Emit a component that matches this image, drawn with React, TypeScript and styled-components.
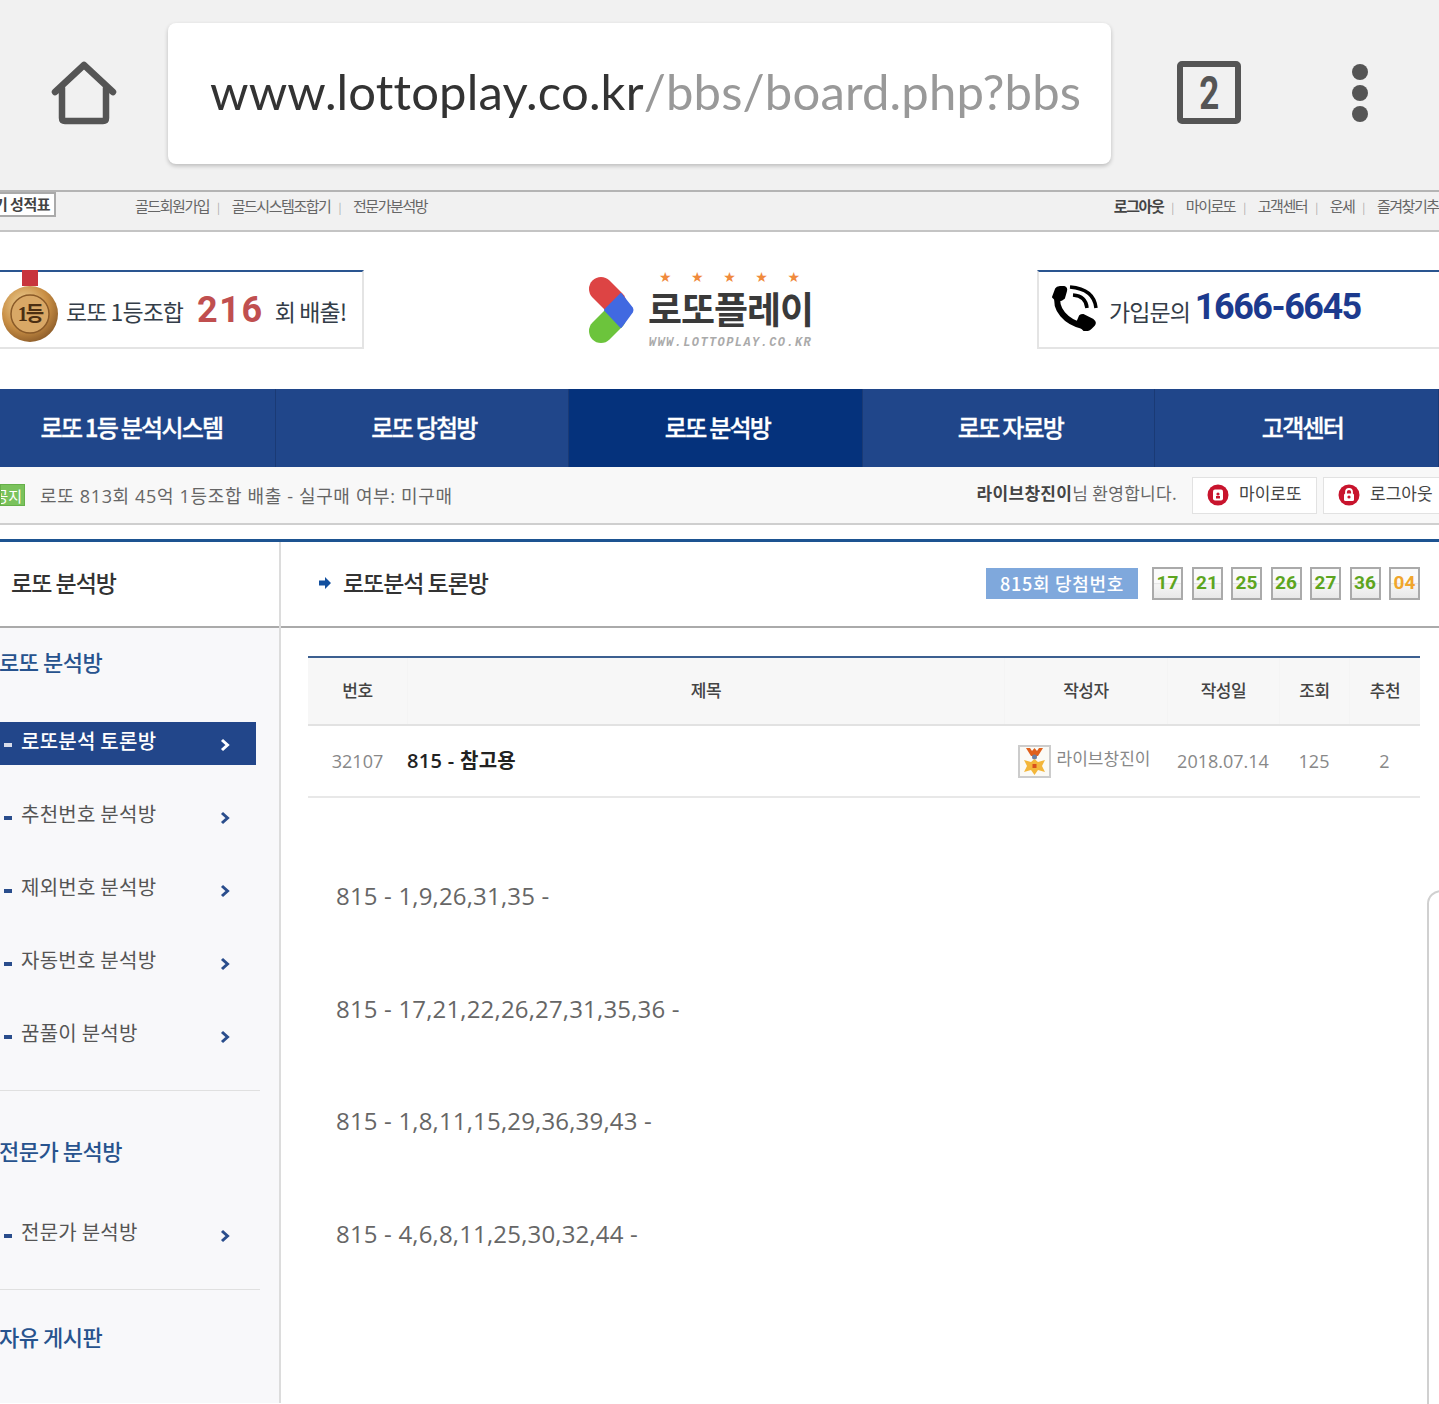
import React from "react";
import styled, { createGlobalStyle } from "styled-components";

const KR = `"Noto Sans CJK KR", "Noto Sans", sans-serif`;
const LATIN = `"Roboto", "Noto Sans CJK KR", sans-serif`;

const Global = createGlobalStyle`
  html, body { margin: 0; padding: 0; background: #fff; }
  body { font-family: ${KR}; color: #333; }
  * { box-sizing: border-box; }
`;

const Page = styled.div`
  position: relative;
  width: 1439px;
  height: 1404px;
  overflow: hidden;
  background: #fff;
`;

/* browser chrome */
const BrowserBar = styled.div`
  display: grid;
  grid-template-columns: 168px 943px 196px 106px 26px;
  align-items: center;
  height: 192px;
  padding-bottom: 3px;
  background: #f1f1f1;
  border-bottom: 2px solid #b4b4b4;
`;
const IconCell = styled.div`
  display: flex;
  justify-content: center;
  align-items: center;
  margin-bottom: 2px;
`;
const UrlBox = styled.div`
  display: flex;
  align-items: center;
  height: 141px;
  padding: 0 0 6px 42px;
  background: #fff;
  border-radius: 8px;
  box-shadow: 0 2px 4px rgba(0, 0, 0, 0.22);
  font-family: "Lato", sans-serif;
  font-size: 49px;
  letter-spacing: 0.16px;
  white-space: nowrap;
  color: #333;
`;
const UrlPath = styled.span`
  color: #999;
`;
const TabBox = styled.div`
  display: flex;
  align-items: center;
  justify-content: center;
  width: 64px;
  height: 63px;
  border: 6px solid #555;
  border-radius: 5px;
  font-family: "Roboto", sans-serif;
  font-weight: 700;
  font-size: 46px;
  line-height: 1;
  color: #555;
`;
const TabCount = styled.span`
  display: inline-block;
  transform: scaleX(0.76);
`;
const Dots = styled.div`
  display: flex;
  flex-direction: column;
  gap: 5px;
`;
const Dot = styled.span`
  width: 16px;
  height: 16px;
  border-radius: 50%;
  background: #555;
`;

/* top links */
const TopLinks = styled.div`
  display: flex;
  align-items: flex-start;
  height: 40px;
  background: #f1f1f1;
  border-bottom: 2px solid #c4c4c4;
  font-size: 15px;
  letter-spacing: -1.45px;
  color: #666;
  white-space: nowrap;
`;
const ScoreBox = styled.div`
  display: flex;
  align-items: center;
  height: 25px;
  margin-left: -10px;
  margin-top: 0;
  padding: 0 4px 2px;
  width: 66px;
  justify-content: flex-end;
  background: #fff;
  border: 2px solid #aaa;
  font-size: 15px;
  letter-spacing: -0.5px;
  font-weight: 700;
  color: #444;
`;
const LinkGroup = styled.div<{ $left?: number; $right?: number }>`
  display: flex;
  align-items: center;
  height: 26px;
  margin-left: ${(p) => (p.$left !== undefined ? `${p.$left}px` : "auto")};
  margin-right: ${(p) => p.$right ?? 0}px;
`;
const TopLink = styled.span<{ $bold?: boolean }>`
  font-weight: ${(p) => (p.$bold ? 700 : 400)};
  color: ${(p) => (p.$bold ? "#444" : "#666")};
  &:not(:last-child)::after {
    content: "|";
    margin: 0 13px 0 8px;
    font-size: 11px;
    font-weight: 400;
    color: #aaa;
  }
`;

/* header */
const Header = styled.div`
  display: grid;
  grid-template-columns: 364px 1fr 402px;
  height: 157px;
  padding-top: 38px;
  align-items: start;
  background: #fff;
`;
const Banner = styled.div<{ $side: "left" | "right" }>`
  position: relative;
  display: flex;
  align-items: center;
  height: 79px;
  border-top: 2px solid #2a5590;
  border-bottom: 2px solid #e4e4e4;
  ${(p) =>
    p.$side === "left"
      ? "border-right: 2px solid #e4e4e4; padding-left: 2px;"
      : "border-left: 2px solid #e4e4e4; padding-left: 12px;"}
`;
const MedalIcon = styled.svg`
  flex: none;
  margin-top: -2px;
  align-self: flex-start;
`;
const PhoneIcon = styled.svg`
  flex: none;
  margin-top: -4px;
`;
const BannerText = styled.span<{ $gap?: number }>`
  margin-left: ${(p) => p.$gap ?? 0}px;
  margin-top: 3px;
  font-size: 23px;
  letter-spacing: -0.95px;
  color: #333d48;
  white-space: nowrap;
`;
const BigRed = styled.span`
  font-family: ${LATIN};
  font-weight: 700;
  font-size: 36px;
  letter-spacing: 1.6px;
  color: #c04f4f;
  margin: 0 11px 0 14px;
`;
const BigBlue = styled.span`
  font-family: ${LATIN};
  font-weight: 700;
  font-size: 36px;
  letter-spacing: -1.5px;
  color: #1c3a8e;
  margin: -6px 0 0 5px;
`;
const Logo = styled.div`
  display: flex;
  align-items: center;
  justify-self: center;
  margin-top: -1px;
  gap: 14px;
  width: 224px;
`;
const LogoMark = styled.svg`
  flex: none;
  margin-top: 0;
`;
const LogoRight = styled.div`
  display: flex;
  flex-direction: column;
  align-items: center;
  width: 164px;
`;
const Stars = styled.div`
  display: flex;
  justify-content: space-between;
  width: 141px;
  margin-right: 2px;
  height: 16px;
  font-size: 14px;
  line-height: 16px;
  color: #f08a3c;
  font-family: "DejaVu Sans", sans-serif;
`;
const LogoWord = styled.div`
  font-size: 37px;
  line-height: 46px;
  font-weight: 700;
  letter-spacing: -1px;
  color: #3a3a3a;
  white-space: nowrap;
`;
const LogoUrl = styled.div`
  font-family: "Liberation Mono", monospace;
  font-size: 12px;
  line-height: 14px;
  margin-top: 5px;
  font-weight: 700;
  font-style: italic;
  letter-spacing: 1.4px;
  color: #aaa;
`;

/* nav */
const Nav = styled.nav`
  display: grid;
  grid-template-columns: 276px 293px 294px 292px 284px;
  height: 78px;
  background: #20468a;
`;
const NavItem = styled.div<{ $active?: boolean; $shift?: number }>`
  display: flex;
  align-items: center;
  justify-content: center;
  padding: 0 ${(p) => (p.$shift && p.$shift < 0 ? -p.$shift : 0)}px 4px ${(p) => (p.$shift && p.$shift > 0 ? p.$shift : 0)}px;
  background: ${(p) => (p.$active ? "#05327c" : "#20468a")};
  border-right: 1px solid #1a3a75;
  font-size: 24px;
  font-weight: 500;
  -webkit-text-stroke: 0.3px #fff;
  letter-spacing: -1.75px;
  color: #fff;
`;

/* notice */
const Notice = styled.div`
  display: flex;
  align-items: center;
  height: 58px;
  background: #f8f8f8;
  border-bottom: 2px solid #cfcfcf;
`;
const NoticeBadge = styled.span`
  display: flex;
  align-items: center;
  justify-content: flex-end;
  width: 25px;
  height: 22px;
  padding-right: 2px;
  background: #7ac25c;
  border: 1px solid #66b04a;
  color: #fff;
  font-size: 15px;
  overflow: hidden;
  white-space: nowrap;
`;
const NoticeText = styled.span`
  margin-left: 15px;
  font-family: "Open Sans", ${KR};
  font-size: 18px;
  letter-spacing: 0.65px;
  color: #666;
  white-space: nowrap;
`;
const Welcome = styled.span`
  margin: -5px 0 0 auto;
  font-size: 17px;
  letter-spacing: 0.3px;
  color: #666;
  white-space: nowrap;
  b {
    color: #444;
    font-weight: 700;
  }
`;
const AuthButton = styled.div<{ $width: number }>`
  display: flex;
  align-items: center;
  flex: none;
  gap: 10px;
  width: ${(p) => p.$width}px;
  height: 37px;
  padding-left: 14px;
  background: #fff;
  border: 1px solid #e2e2e2;
  font-size: 17px;
  color: #444;
  white-space: nowrap;
`;
const AuthLabel = styled.span`
  margin-top: -5px;
`;
const AuthRow = styled.div`
  display: flex;
  gap: 6px;
  margin-left: 15px;
  margin-right: -8px;
`;

/* content */
const Gap = styled.div`
  height: 14px;
  background: #fff;
`;
const Content = styled.div`
  display: flex;
  height: 864px;
  border-top: 3px solid #1d5391;
`;
const Side = styled.aside`
  flex: none;
  width: 281px;
  background: #f8f8fa;
  border-right: 2px solid #dcdcdc;
`;
const SideHead = styled.div`
  display: flex;
  align-items: center;
  height: 86px;
  padding: 0 0 5px 11px;
  background: #fff;
  border-bottom: 2px solid #aaa;
  font-size: 23px;
  font-weight: 500;
  letter-spacing: -1px;
  color: #333;
`;
const SideGroup = styled.div<{ $top: number; $gap: number }>`
  padding-top: ${(p) => p.$top}px;
  & > h3 {
    margin-bottom: ${(p) => p.$gap}px;
  }
`;
const GroupTitle = styled.h3`
  margin: 0 0 0 -1px;
  height: 30px;
  font-size: 22px;
  line-height: 30px;
  font-weight: 500;
  letter-spacing: -0.5px;
  color: #27538e;
  white-space: nowrap;
`;
const SideItem = styled.div<{ $active?: boolean }>`
  display: flex;
  align-items: center;
  width: 256px;
  height: 43px;
  margin-bottom: 30px;
  padding-left: 4px;
  background: ${(p) => (p.$active ? "#22468a" : "transparent")};
  color: ${(p) => (p.$active ? "#fff" : "#555")};
  font-size: 20px;
  font-weight: ${(p) => (p.$active ? 500 : 400)};
  letter-spacing: 0.25px;
  white-space: nowrap;
  &:last-child {
    margin-bottom: 0;
  }
`;
const Bullet = styled.span<{ $active?: boolean }>`
  flex: none;
  width: 8px;
  height: 4px;
  margin-right: 9px;
  margin-top: 3px;
  background: ${(p) => (p.$active ? "#d8dcea" : "#2a4d8c")};
`;
const ItemLabel = styled.span`
  flex: 1;
  margin-top: -6px;
`;
const Chevron = styled.svg`
  flex: none;
  margin-right: 26px;
  margin-top: 3px;
`;
const SideDivider = styled.div<{ $top: number }>`
  width: 260px;
  height: 1px;
  margin-top: ${(p) => p.$top}px;
  background: #e0e0e0;
`;

const Main = styled.main`
  flex: 1;
  min-width: 0;
  background: #fff;
`;
const MainHead = styled.div`
  display: flex;
  align-items: center;
  height: 86px;
  padding: 0 19px 2px 38px;
  border-bottom: 2px solid #aaa;
`;
const ArrowIcon = styled.svg`
  flex: none;
`;
const MainTitle = styled.h1`
  margin: -3px 0 0 12px;
  font-size: 23px;
  font-weight: 500;
  letter-spacing: -1.05px;
  color: #333;
  white-space: nowrap;
`;
const DrawLabel = styled.div`
  display: flex;
  align-items: center;
  justify-content: center;
  width: 152px;
  height: 31px;
  margin-left: auto;
  background: #7fa8dc;
  color: #fff;
  font-size: 18px;
  font-weight: 500;
  letter-spacing: 0.7px;
  white-space: nowrap;
`;
const Balls = styled.div`
  display: flex;
  gap: 8.5px;
  margin-left: 14px;
`;
const Ball = styled.span<{ $bonus?: boolean }>`
  display: flex;
  align-items: center;
  justify-content: center;
  width: 31px;
  height: 33px;
  border: 2px solid #aaa;
  background: linear-gradient(#fafafa 0 48%, #e6e6e6 50%, #f5f5f5 54%, #e8e8e8);
  font-family: ${LATIN};
  font-weight: 700;
  font-size: 19px;
  padding-bottom: 2px;
  color: ${(p) => (p.$bonus ? "#f0a52c" : "#5da51e")};
`;

const Board = styled.div`
  margin: 28px 19px 0 27px;
`;
const Cols = `99px 597px 163px 112px 70px 71px`;
const THead = styled.div`
  display: grid;
  grid-template-columns: ${Cols};
  height: 70px;
  background: #f7f7f7;
  border-top: 2px solid #3c5f90;
  border-bottom: 2px solid #e2e2e2;
`;
const Th = styled.div`
  display: flex;
  align-items: center;
  justify-content: center;
  padding-bottom: 4px;
  font-size: 17px;
  font-weight: 500;
  letter-spacing: -0.4px;
  color: #444;
  & + & {
    border-left: 1px solid #f4f4f4;
  }
`;
const TRow = styled.div`
  display: grid;
  grid-template-columns: ${Cols};
  align-items: center;
  height: 72px;
  border-bottom: 2px solid #e8e8e8;
`;
const Td = styled.div<{ $align?: string; $nudge?: number }>`
  display: flex;
  align-items: center;
  justify-content: ${(p) => p.$align ?? "center"};
  padding-right: ${(p) => p.$nudge ?? 0}px;
  font-family: "Open Sans", ${KR};
  font-size: 18px;
  color: #888;
  white-space: nowrap;
`;
const RowTitle = styled.span`
  font-family: "Open Sans", ${KR};
  font-size: 20px;
  font-weight: 600;
  color: #222;
  letter-spacing: 0.3px;
  padding-bottom: 4px;
`;
const AuthorName = styled.span`
  margin: -7px 0 0 6px;
  font-family: ${KR};
  font-size: 17px;
  color: #888;
`;
const Avatar = styled.span`
  display: flex;
  flex: none;
  align-items: center;
  justify-content: center;
  width: 33px;
  height: 33px;
  background: #fbfaf5;
  border: 2px solid #ccc;
`;
const Body = styled.div`
  padding: 42px 0 0 55px;
`;
const BodyLine = styled.p`
  margin: 0;
  height: 112.6px;
  font-family: "Open Sans", sans-serif;
  font-size: 24px;
  line-height: 112.6px;
  letter-spacing: 0.17px;
  color: #666;
  white-space: nowrap;
`;
const EdgeHandle = styled.div`
  position: absolute;
  left: 1427px;
  top: 890px;
  width: 40px;
  height: 560px;
  border: 2px solid #d0d0d0;
  border-radius: 14px;
  background: #fff;
`;

const ChevronIcon = ({ color }: { color: string }) => (
  <Chevron width="10" height="14" viewBox="0 0 10 14">
    <polyline points="2,2 7.5,7 2,12" fill="none" stroke={color} strokeWidth="3" />
  </Chevron>
);

const sideA = ["로또분석 토론방", "추천번호 분석방", "제외번호 분석방", "자동번호 분석방", "꿈풀이 분석방"];

const LockIcon = ({ kind }: { kind: "my" | "out" }) => (
  <svg width="22" height="22" viewBox="0 0 22 22">
    <circle cx="11" cy="11" r="10.5" fill="#c8142d" />
    {kind === "my" ? (
      <rect x="6" y="5.5" width="10" height="11" rx="2" fill="#fff" />
    ) : (
      <>
        <path d="M8 10V8a3 3 0 0 1 6 0v2" fill="none" stroke="#fff" strokeWidth="1.8" />
        <rect x="6" y="9.5" width="10" height="7.5" rx="1.5" fill="#fff" />
      </>
    )}
    <circle cx="11" cy={kind === "my" ? 10 : 13} r="1.6" fill="#c8142d" />
    {kind === "my" && <rect x="9" y="12" width="4" height="2.5" fill="#c8142d" />}
  </svg>
);

export default function App() {
  return (
    <Page>
      <Global />
      <BrowserBar>
        <IconCell>
          <svg width="66" height="64" viewBox="0 0 66 64">
            <path
              d="M4 31 L33 4 L62 31 M11 27 V57 Q11 60 14 60 H52 Q55 60 55 57 V27"
              fill="none"
              stroke="#555"
              strokeWidth="6.5"
              strokeLinecap="round"
              strokeLinejoin="round"
            />
          </svg>
        </IconCell>
        <UrlBox>
          www.lottoplay.co.kr<UrlPath>/bbs/board.php?bbs</UrlPath>
        </UrlBox>
        <IconCell>
          <TabBox>
            <TabCount>2</TabCount>
          </TabBox>
        </IconCell>
        <IconCell>
          <Dots>
            <Dot />
            <Dot />
            <Dot />
          </Dots>
        </IconCell>
        <div />
      </BrowserBar>

      <TopLinks>
        <ScoreBox>기 성적표</ScoreBox>
        <LinkGroup $left={79}>
          <TopLink>골드회원가입</TopLink>
          <TopLink>골드시스템조합기</TopLink>
          <TopLink>전문가분석방</TopLink>
        </LinkGroup>
        <LinkGroup $right={-12}>
          <TopLink $bold>로그아웃</TopLink>
          <TopLink>마이로또</TopLink>
          <TopLink>고객센터</TopLink>
          <TopLink>운세</TopLink>
          <TopLink>즐겨찾기추가</TopLink>
        </LinkGroup>
      </TopLinks>

      <Header>
        <Banner $side="left">
          <MedalIcon width="56" height="74" viewBox="0 0 56 74">
            <defs>
              <radialGradient id="gold" cx="40%" cy="35%" r="70%">
                <stop offset="0" stopColor="#f3d9a0" />
                <stop offset="0.6" stopColor="#c98f45" />
                <stop offset="1" stopColor="#8a5a28" />
              </radialGradient>
            </defs>
            <rect x="20" y="0" width="16" height="16" fill="#c8343c" />
            <circle cx="28" cy="44" r="28" fill="url(#gold)" />
            <circle cx="28" cy="44" r="19" fill="#d9a866" stroke="#8a5a28" strokeWidth="1.5" />
            <text x="28" y="51" textAnchor="middle" fontSize="20" fontWeight="700" fontFamily='"Liberation Serif", "Noto Sans CJK KR", serif' fill="#4b2e12" letterSpacing="-2">
              1등
            </text>
          </MedalIcon>
          <BannerText $gap={8}>로또 1등조합</BannerText>
          <BigRed>216</BigRed>
          <BannerText>회 배출!</BannerText>
        </Banner>
        <Logo>
          <LogoMark width="46" height="66" viewBox="0 0 46 66">
            <line x1="12" y1="12" x2="25" y2="25" stroke="#dd4444" strokeWidth="24" strokeLinecap="round" />
            <line x1="12" y1="54" x2="25" y2="41" stroke="#6cc43c" strokeWidth="24" strokeLinecap="round" />
            <path d="M32 17 L43 31 Q44 33 43 35 L32 50 L16 33 Z" fill="#4169e1" stroke="#4169e1" strokeWidth="2" strokeLinejoin="round" />
          </LogoMark>
          <LogoRight>
            <Stars>
              <span>★</span>
              <span>★</span>
              <span>★</span>
              <span>★</span>
              <span>★</span>
            </Stars>
            <LogoWord>로또플레이</LogoWord>
            <LogoUrl>WWW.LOTTOPLAY.CO.KR</LogoUrl>
          </LogoRight>
        </Logo>
        <Banner $side="right">
          <PhoneIcon width="47" height="46" viewBox="0 0 47 46">
            <path d="M7 10 C3 24 15 37 32 41" fill="none" stroke="#000" strokeWidth="6" />
            <path d="M2 12 L5 4 Q6 2 9 2 L13 2 Q16 3 15 6 L13 13 Q10 16 5 15 Z" fill="#000" stroke="#000" strokeWidth="2" strokeLinejoin="round" />
            <path d="M26 38 L29 31 Q30 30 32 30 L42 35 Q45 37 43 40 L40 43 Q37 46 33 45 Z" fill="#000" stroke="#000" strokeWidth="2" strokeLinejoin="round" />
            <path d="M19 2 Q43 4 45 23" fill="none" stroke="#000" strokeWidth="3.5" />
            <path d="M22 10 Q35 11 36 23" fill="none" stroke="#000" strokeWidth="3.5" />
          </PhoneIcon>
          <BannerText $gap={11}>가입문의</BannerText>
          <BigBlue>1666-6645</BigBlue>
        </Banner>
      </Header>

      <Nav>
        <NavItem $shift={-12}>로또 1등 분석시스템</NavItem>
        <NavItem $shift={4}>로또 당첨방</NavItem>
        <NavItem $active $shift={4}>
          로또 분석방
        </NavItem>
        <NavItem $shift={4}>로또 자료방</NavItem>
        <NavItem $shift={12}>고객센터</NavItem>
      </Nav>

      <Notice>
        <NoticeBadge>공지</NoticeBadge>
        <NoticeText>로또 813회 45억 1등조합 배출 - 실구매 여부: 미구매</NoticeText>
        <Welcome>
          <b>라이브창진이</b>님 환영합니다.
        </Welcome>
        <AuthRow>
          <AuthButton $width={125}>
            <LockIcon kind="my" />
            <AuthLabel>마이로또</AuthLabel>
          </AuthButton>
          <AuthButton $width={124}>
            <LockIcon kind="out" />
            <AuthLabel>로그아웃</AuthLabel>
          </AuthButton>
        </AuthRow>
      </Notice>

      <Gap />
      <Content>
        <Side>
          <SideHead>로또 분석방</SideHead>
          <SideGroup $top={18} $gap={46}>
            <GroupTitle>로또 분석방</GroupTitle>
            {sideA.map((s, i) => (
              <SideItem key={s} $active={i === 0}>
                <Bullet $active={i === 0} />
                <ItemLabel>{s}</ItemLabel>
                <ChevronIcon color={i === 0 ? "#fff" : "#2a4d8c"} />
              </SideItem>
            ))}
          </SideGroup>
          <SideDivider $top={33} />
          <SideGroup $top={44} $gap={48}>
            <GroupTitle>전문가 분석방</GroupTitle>
            <SideItem>
              <Bullet />
              <ItemLabel>전문가 분석방</ItemLabel>
              <ChevronIcon color="#2a4d8c" />
            </SideItem>
          </SideGroup>
          <SideDivider $top={33} />
          <SideGroup $top={31} $gap={0}>
            <GroupTitle>자유 게시판</GroupTitle>
          </SideGroup>
        </Side>
        <Main>
          <MainHead>
            <ArrowIcon width="12" height="12" viewBox="0 0 12 12">
              <path d="M0 3.5 H6 V0 L12 6 L6 12 V8.5 H0 Z" fill="#124f9e" />
            </ArrowIcon>
            <MainTitle>로또분석 토론방</MainTitle>
            <DrawLabel>815회 당첨번호</DrawLabel>
            <Balls>
              {["17", "21", "25", "26", "27", "36"].map((n) => (
                <Ball key={n}>{n}</Ball>
              ))}
              <Ball $bonus>04</Ball>
            </Balls>
          </MainHead>
          <Board>
            <THead>
              <Th>번호</Th>
              <Th>제목</Th>
              <Th>작성자</Th>
              <Th>작성일</Th>
              <Th>조회</Th>
              <Th>추천</Th>
            </THead>
            <TRow>
              <Td>32107</Td>
              <Td $align="flex-start">
                <RowTitle>815 - 참고용</RowTitle>
              </Td>
              <Td $nudge={3}>
                <Avatar>
                  <svg width="25" height="27" viewBox="0 0 25 27">
                    <path d="M4 0 H8 L10 3 L12.5 0 L15 3 L17 0 H21 L16 8 H9 Z" fill="#e0601c" />
                    <circle cx="12.5" cy="9" r="2.5" fill="#6d7fa0" />
                    <path d="M12.5 11 L16 14 L23 12 L20 18 L23 24 L16 22 L12.5 27 L9 22 L2 24 L5 18 L2 12 L9 14 Z" fill="#f3b63a" />
                    <rect x="10.5" y="16" width="4" height="4" fill="#d8501c" />
                  </svg>
                </Avatar>
                <AuthorName>라이브창진이</AuthorName>
              </Td>
              <Td>2018.07.14</Td>
              <Td>125</Td>
              <Td>2</Td>
            </TRow>
          </Board>
          <Body>
            <BodyLine>815 - 1,9,26,31,35 -</BodyLine>
            <BodyLine>815 - 17,21,22,26,27,31,35,36 -</BodyLine>
            <BodyLine>815 - 1,8,11,15,29,36,39,43 -</BodyLine>
            <BodyLine>815 - 4,6,8,11,25,30,32,44 -</BodyLine>
          </Body>
        </Main>
      </Content>
      <EdgeHandle />
    </Page>
  );
}
